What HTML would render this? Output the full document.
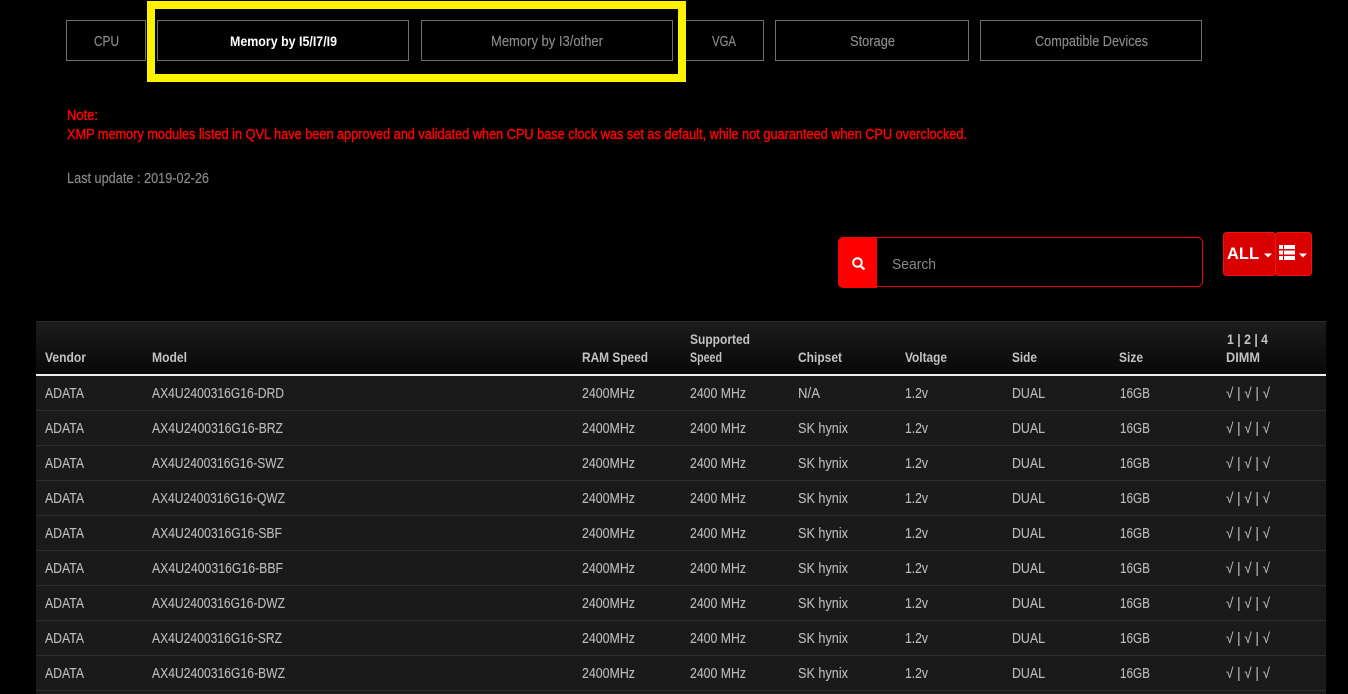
<!DOCTYPE html>
<html><head><meta charset="utf-8"><style>
html,body{margin:0;padding:0;background:#000;width:1348px;height:694px;overflow:hidden}
svg{display:block;position:absolute;left:0;top:0}
text{font-family:"Liberation Sans",sans-serif;font-size:14.5px}
.b{fill:#000;stroke:#6e6e6e;stroke-width:1}
.t{fill:#8a8a8a;font-size:14.5px;stroke:#8a8a8a;stroke-width:.15px}
.r{fill:#ff0000;font-size:14.5px;stroke:#ff0000;stroke-width:.4px}
.h{fill:#c2c2c2;font-weight:bold;font-size:14px}
.d{fill:#bababa;stroke:#bababa;stroke-width:.12px}
.l{fill:#2d2d2d}
</style></head><body>
<svg width="1348" height="694" viewBox="0 0 1348 694" xmlns="http://www.w3.org/2000/svg">
<defs>
<linearGradient id="hg" x1="0" y1="0" x2="0" y2="1"><stop offset="0" stop-color="#1c1c1c"/><stop offset="1" stop-color="#080808"/></linearGradient>
<pattern id="dp" width="4" height="4" patternUnits="userSpaceOnUse"><rect width="4" height="4" fill="#181818"/><path d="M0 4L4 0" stroke="#1c1c1c" stroke-width="1"/></pattern>
</defs>
<rect width="1348" height="694" fill="#000"/>

<rect class="b" x="66.5" y="20.5" width="79" height="40"/>
<rect class="b" x="157.5" y="20.5" width="251" height="40"/>
<rect class="b" x="421.5" y="20.5" width="251" height="40"/>
<rect class="b" x="680.5" y="20.5" width="83" height="40"/>
<rect class="b" x="775.5" y="20.5" width="193" height="40"/>
<rect class="b" x="980.5" y="20.5" width="221" height="40"/>
<rect x="151" y="5" width="531" height="73" fill="none" stroke="#fff200" stroke-width="8"/>

<text class="t" x="94" y="46" textLength="25" lengthAdjust="spacingAndGlyphs">CPU</text>
<text x="230" y="46" fill="#fff" font-weight="bold" style="font-size:14px" textLength="107" lengthAdjust="spacingAndGlyphs">Memory by I5/I7/I9</text>
<text class="t" x="491" y="46" textLength="112" lengthAdjust="spacingAndGlyphs">Memory by I3/other</text>
<text class="t" x="712" y="46" textLength="24" lengthAdjust="spacingAndGlyphs">VGA</text>
<text class="t" x="850" y="46" textLength="45" lengthAdjust="spacingAndGlyphs">Storage</text>
<text class="t" x="1035" y="46" textLength="113" lengthAdjust="spacingAndGlyphs">Compatible Devices</text>

<text class="r" x="67" y="120" textLength="31" lengthAdjust="spacingAndGlyphs">Note:</text>
<text class="r" x="67" y="139" textLength="900" lengthAdjust="spacingAndGlyphs">XMP memory modules listed in QVL have been approved and validated when CPU base clock was set as default, while not guaranteed when CPU overclocked.</text>
<text class="t" x="67" y="183" textLength="142" lengthAdjust="spacingAndGlyphs">Last update : 2019-02-26</text>

<rect x="838.5" y="237.5" width="364" height="49" rx="5" fill="#000" stroke="#f00000"/>
<path d="M877 237H843a5 5 0 0 0-5 5v41a5 5 0 0 0 5 5h34z" fill="#ff0000"/>
<circle cx="857.500" cy="262.500" r="4.300" fill="none" stroke="#fff" stroke-width="2"/>
<path d="M860.500 266l4 3.500" stroke="#fff" stroke-width="2.200" fill="none"/>
<text x="892" y="269" fill="#84888c" textLength="44" lengthAdjust="spacingAndGlyphs">Search</text>

<rect x="1223.500" y="232.500" width="52" height="43" rx="3" fill="#d80000" stroke="#f01414"/>
<rect x="1275.500" y="232.500" width="36" height="43" rx="3" fill="#d80000" stroke="#f01414"/>
<text x="1227" y="259" fill="#fff" font-weight="bold" style="font-size:17px" textLength="32" lengthAdjust="spacingAndGlyphs">ALL</text>
<path d="M1264 253.500h8l-4 4z" fill="#fff"/>
<path d="M1279 245h4v4h-4zM1284 245h11v4h-11zM1279 250.500h4v4h-4zM1284 250.500h11v4h-11zM1279 256h4v4h-4zM1284 256h11v4h-11z" fill="#fff"/>
<path d="M1299 253.500h8l-4 4z" fill="#fff"/>

<rect x="36" y="321" width="1290" height="373" fill="url(#dp)"/>
<rect x="36" y="321" width="1290" height="53" fill="url(#hg)"/>
<rect x="36" y="321" width="1290" height="1" fill="#2a2a2a"/>
<rect x="36" y="374" width="1290" height="2" fill="#eeeeee"/>
<rect class="l" x="36" y="410" width="1290" height="1"/>
<rect class="l" x="36" y="445" width="1290" height="1"/>
<rect class="l" x="36" y="480" width="1290" height="1"/>
<rect class="l" x="36" y="515" width="1290" height="1"/>
<rect class="l" x="36" y="550" width="1290" height="1"/>
<rect class="l" x="36" y="585" width="1290" height="1"/>
<rect class="l" x="36" y="620" width="1290" height="1"/>
<rect class="l" x="36" y="655" width="1290" height="1"/>
<rect class="l" x="36" y="690" width="1290" height="1"/>

<text class="h" x="45" y="362" textLength="41" lengthAdjust="spacingAndGlyphs">Vendor</text>
<text class="h" x="152" y="362" textLength="35" lengthAdjust="spacingAndGlyphs">Model</text>
<text class="h" x="582" y="362" textLength="66" lengthAdjust="spacingAndGlyphs">RAM Speed</text>
<text class="h" x="690" y="344" textLength="60" lengthAdjust="spacingAndGlyphs">Supported</text>
<text class="h" x="690" y="362" textLength="32" lengthAdjust="spacingAndGlyphs">Speed</text>
<text class="h" x="798" y="362" textLength="44" lengthAdjust="spacingAndGlyphs">Chipset</text>
<text class="h" x="905" y="362" textLength="42" lengthAdjust="spacingAndGlyphs">Voltage</text>
<text class="h" x="1012" y="362" textLength="25" lengthAdjust="spacingAndGlyphs">Side</text>
<text class="h" x="1119" y="362" textLength="24" lengthAdjust="spacingAndGlyphs">Size</text>
<text class="h" x="1227" y="344" textLength="41" lengthAdjust="spacingAndGlyphs">1 | 2 | 4</text>
<text class="h" x="1226" y="362" textLength="34" lengthAdjust="spacingAndGlyphs">DIMM</text>

<text class="d" x="45" y="398" textLength="39" lengthAdjust="spacingAndGlyphs">ADATA</text><text class="d" x="152" y="398" textLength="132" lengthAdjust="spacingAndGlyphs">AX4U2400316G16-DRD</text><text class="d" x="582" y="398" textLength="53" lengthAdjust="spacingAndGlyphs">2400MHz</text><text class="d" x="690" y="398" textLength="56" lengthAdjust="spacingAndGlyphs">2400 MHz</text><text class="d" x="798" y="398" textLength="22" lengthAdjust="spacingAndGlyphs">N/A</text><text class="d" x="905" y="398" textLength="23" lengthAdjust="spacingAndGlyphs">1.2v</text><text class="d" x="1012" y="398" textLength="33" lengthAdjust="spacingAndGlyphs">DUAL</text><text class="d" x="1120" y="398" textLength="30" lengthAdjust="spacingAndGlyphs">16GB</text><text class="d" x="1226" y="398" textLength="44" lengthAdjust="spacingAndGlyphs">√ | √ | √</text>
<text class="d" x="45" y="433" textLength="39" lengthAdjust="spacingAndGlyphs">ADATA</text><text class="d" x="152" y="433" textLength="131" lengthAdjust="spacingAndGlyphs">AX4U2400316G16-BRZ</text><text class="d" x="582" y="433" textLength="53" lengthAdjust="spacingAndGlyphs">2400MHz</text><text class="d" x="690" y="433" textLength="56" lengthAdjust="spacingAndGlyphs">2400 MHz</text><text class="d" x="798" y="433" textLength="50" lengthAdjust="spacingAndGlyphs">SK hynix</text><text class="d" x="905" y="433" textLength="23" lengthAdjust="spacingAndGlyphs">1.2v</text><text class="d" x="1012" y="433" textLength="33" lengthAdjust="spacingAndGlyphs">DUAL</text><text class="d" x="1120" y="433" textLength="30" lengthAdjust="spacingAndGlyphs">16GB</text><text class="d" x="1226" y="433" textLength="44" lengthAdjust="spacingAndGlyphs">√ | √ | √</text>
<text class="d" x="45" y="468" textLength="39" lengthAdjust="spacingAndGlyphs">ADATA</text><text class="d" x="152" y="468" textLength="132" lengthAdjust="spacingAndGlyphs">AX4U2400316G16-SWZ</text><text class="d" x="582" y="468" textLength="53" lengthAdjust="spacingAndGlyphs">2400MHz</text><text class="d" x="690" y="468" textLength="56" lengthAdjust="spacingAndGlyphs">2400 MHz</text><text class="d" x="798" y="468" textLength="50" lengthAdjust="spacingAndGlyphs">SK hynix</text><text class="d" x="905" y="468" textLength="23" lengthAdjust="spacingAndGlyphs">1.2v</text><text class="d" x="1012" y="468" textLength="33" lengthAdjust="spacingAndGlyphs">DUAL</text><text class="d" x="1120" y="468" textLength="30" lengthAdjust="spacingAndGlyphs">16GB</text><text class="d" x="1226" y="468" textLength="44" lengthAdjust="spacingAndGlyphs">√ | √ | √</text>
<text class="d" x="45" y="503" textLength="39" lengthAdjust="spacingAndGlyphs">ADATA</text><text class="d" x="152" y="503" textLength="133" lengthAdjust="spacingAndGlyphs">AX4U2400316G16-QWZ</text><text class="d" x="582" y="503" textLength="53" lengthAdjust="spacingAndGlyphs">2400MHz</text><text class="d" x="690" y="503" textLength="56" lengthAdjust="spacingAndGlyphs">2400 MHz</text><text class="d" x="798" y="503" textLength="50" lengthAdjust="spacingAndGlyphs">SK hynix</text><text class="d" x="905" y="503" textLength="23" lengthAdjust="spacingAndGlyphs">1.2v</text><text class="d" x="1012" y="503" textLength="33" lengthAdjust="spacingAndGlyphs">DUAL</text><text class="d" x="1120" y="503" textLength="30" lengthAdjust="spacingAndGlyphs">16GB</text><text class="d" x="1226" y="503" textLength="44" lengthAdjust="spacingAndGlyphs">√ | √ | √</text>
<text class="d" x="45" y="538" textLength="39" lengthAdjust="spacingAndGlyphs">ADATA</text><text class="d" x="152" y="538" textLength="130" lengthAdjust="spacingAndGlyphs">AX4U2400316G16-SBF</text><text class="d" x="582" y="538" textLength="53" lengthAdjust="spacingAndGlyphs">2400MHz</text><text class="d" x="690" y="538" textLength="56" lengthAdjust="spacingAndGlyphs">2400 MHz</text><text class="d" x="798" y="538" textLength="50" lengthAdjust="spacingAndGlyphs">SK hynix</text><text class="d" x="905" y="538" textLength="23" lengthAdjust="spacingAndGlyphs">1.2v</text><text class="d" x="1012" y="538" textLength="33" lengthAdjust="spacingAndGlyphs">DUAL</text><text class="d" x="1120" y="538" textLength="30" lengthAdjust="spacingAndGlyphs">16GB</text><text class="d" x="1226" y="538" textLength="44" lengthAdjust="spacingAndGlyphs">√ | √ | √</text>
<text class="d" x="45" y="573" textLength="39" lengthAdjust="spacingAndGlyphs">ADATA</text><text class="d" x="152" y="573" textLength="131" lengthAdjust="spacingAndGlyphs">AX4U2400316G16-BBF</text><text class="d" x="582" y="573" textLength="53" lengthAdjust="spacingAndGlyphs">2400MHz</text><text class="d" x="690" y="573" textLength="56" lengthAdjust="spacingAndGlyphs">2400 MHz</text><text class="d" x="798" y="573" textLength="50" lengthAdjust="spacingAndGlyphs">SK hynix</text><text class="d" x="905" y="573" textLength="23" lengthAdjust="spacingAndGlyphs">1.2v</text><text class="d" x="1012" y="573" textLength="33" lengthAdjust="spacingAndGlyphs">DUAL</text><text class="d" x="1120" y="573" textLength="30" lengthAdjust="spacingAndGlyphs">16GB</text><text class="d" x="1226" y="573" textLength="44" lengthAdjust="spacingAndGlyphs">√ | √ | √</text>
<text class="d" x="45" y="608" textLength="39" lengthAdjust="spacingAndGlyphs">ADATA</text><text class="d" x="152" y="608" textLength="133" lengthAdjust="spacingAndGlyphs">AX4U2400316G16-DWZ</text><text class="d" x="582" y="608" textLength="53" lengthAdjust="spacingAndGlyphs">2400MHz</text><text class="d" x="690" y="608" textLength="56" lengthAdjust="spacingAndGlyphs">2400 MHz</text><text class="d" x="798" y="608" textLength="50" lengthAdjust="spacingAndGlyphs">SK hynix</text><text class="d" x="905" y="608" textLength="23" lengthAdjust="spacingAndGlyphs">1.2v</text><text class="d" x="1012" y="608" textLength="33" lengthAdjust="spacingAndGlyphs">DUAL</text><text class="d" x="1120" y="608" textLength="30" lengthAdjust="spacingAndGlyphs">16GB</text><text class="d" x="1226" y="608" textLength="44" lengthAdjust="spacingAndGlyphs">√ | √ | √</text>
<text class="d" x="45" y="643" textLength="39" lengthAdjust="spacingAndGlyphs">ADATA</text><text class="d" x="152" y="643" textLength="130" lengthAdjust="spacingAndGlyphs">AX4U2400316G16-SRZ</text><text class="d" x="582" y="643" textLength="53" lengthAdjust="spacingAndGlyphs">2400MHz</text><text class="d" x="690" y="643" textLength="56" lengthAdjust="spacingAndGlyphs">2400 MHz</text><text class="d" x="798" y="643" textLength="50" lengthAdjust="spacingAndGlyphs">SK hynix</text><text class="d" x="905" y="643" textLength="23" lengthAdjust="spacingAndGlyphs">1.2v</text><text class="d" x="1012" y="643" textLength="33" lengthAdjust="spacingAndGlyphs">DUAL</text><text class="d" x="1120" y="643" textLength="30" lengthAdjust="spacingAndGlyphs">16GB</text><text class="d" x="1226" y="643" textLength="44" lengthAdjust="spacingAndGlyphs">√ | √ | √</text>
<text class="d" x="45" y="678" textLength="39" lengthAdjust="spacingAndGlyphs">ADATA</text><text class="d" x="152" y="678" textLength="133" lengthAdjust="spacingAndGlyphs">AX4U2400316G16-BWZ</text><text class="d" x="582" y="678" textLength="53" lengthAdjust="spacingAndGlyphs">2400MHz</text><text class="d" x="690" y="678" textLength="56" lengthAdjust="spacingAndGlyphs">2400 MHz</text><text class="d" x="798" y="678" textLength="50" lengthAdjust="spacingAndGlyphs">SK hynix</text><text class="d" x="905" y="678" textLength="23" lengthAdjust="spacingAndGlyphs">1.2v</text><text class="d" x="1012" y="678" textLength="33" lengthAdjust="spacingAndGlyphs">DUAL</text><text class="d" x="1120" y="678" textLength="30" lengthAdjust="spacingAndGlyphs">16GB</text><text class="d" x="1226" y="678" textLength="44" lengthAdjust="spacingAndGlyphs">√ | √ | √</text>
</svg>
</body></html>
